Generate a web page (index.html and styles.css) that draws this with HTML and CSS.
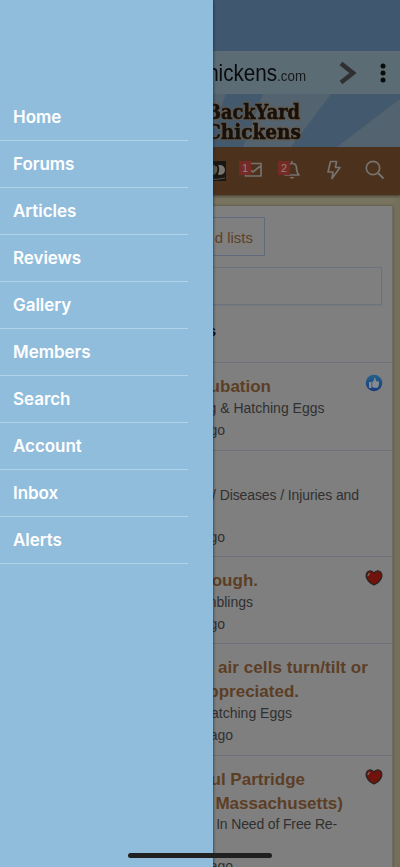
FILE: index.html
```html
<!DOCTYPE html>
<html lang="en">
<head>
<meta charset="utf-8">
<meta name="viewport" content="width=device-width, initial-scale=1">
<title>BackYard Chickens</title>
<link rel="stylesheet" href="styles.css">
</head>
<body>
<div class="page">
  <div class="status"></div>
  <header class="toolbar">
    <div class="address">hickens<small>.com</small></div>
    <svg class="forward" width="18" height="24" viewBox="0 0 18 24"><path d="M2 2.500 14 12 2 21.500" fill="none" stroke="#302f31" stroke-width="4.500"/></svg>
    <svg class="more" width="6" height="20" viewBox="0 0 6 20"><g fill="#080a0b"><circle cx="3" cy="3" r="2.500"/><circle cx="3" cy="10" r="2.500"/><circle cx="3" cy="17" r="2.500"/></g></svg>
  </header>
  <svg class="banner" width="400" height="53" viewBox="0 0 400 53">
    <rect width="400" height="53" fill="#53636f"/>
    <path d="M226 0h37l-20 53h-36z" fill="#435a6e"/>
    <path d="M331 0h69v5l-63 48h-46z" fill="#435a6e"/>
    <g class="logo"><text x="206" y="25" textLength="94" lengthAdjust="spacingAndGlyphs">BackYard</text><text x="206" y="44.500" textLength="95" lengthAdjust="spacingAndGlyphs">Chickens</text></g>
  </svg>
  <nav class="nav">
    <svg class="avatar" width="20" height="20" viewBox="0 0 20 20"><rect width="20" height="20" fill="#181713"/><ellipse cx="14" cy="9" rx="5" ry="5" fill="#77756d"/><ellipse cx="7" cy="9" rx="4" ry="5" fill="#5c5a4d"/><path d="M11 4q3 5-1 10" fill="none" stroke="#181713" stroke-width="2"/><path d="M1 17q9 3 18 0" fill="none" stroke="#555047"/></svg>
    <span class="tool"><svg width="19" height="16" viewBox="0 0 19 16"><path d="M1.500 1.500h15.500v12.500h-15.500zM2 5l7 5 8-6.500" fill="none" stroke="#77726e" stroke-width="1.700" stroke-linejoin="round"/></svg><b class="badge">1</b></span>
    <span class="tool bell"><svg width="18" height="20" viewBox="0 0 18 20"><path d="M2 15h14c-2-2-2.500-3-2.500-7C13.500 5 12 3.500 9 3.500S4.500 5 4.500 8c0 4-.5 5-2.500 7zM9 1v2" fill="none" stroke="#77726e" stroke-width="1.700" stroke-linejoin="round"/><path d="M6.500 17h5q-2.500 3.500-5 0z" fill="#77726e"/></svg><b class="badge">2</b></span>
    <svg class="bolt" width="16" height="20" viewBox="0 0 16 20"><path d="M4.500 1.500h6L9.500 7.500h4.500L6 18.500 7 12H2z" fill="none" stroke="#77726e" stroke-width="1.700" stroke-linejoin="round"/></svg>
    <svg class="search" width="20" height="20" viewBox="0 0 20 20"><path d="M13 13 18.500 18.500" stroke="#77726e" stroke-width="2"/><circle cx="8" cy="8" r="6.700" fill="none" stroke="#77726e" stroke-width="1.700"/></svg>
  </nav>
  <main class="card">
    <div class="lists">d lists</div>
    <div class="field"></div>
    <h2 class="heading">s</h2>
    <article class="row r1">
      <h3 class="e271">ubation</h3><p class="e324">g &amp; Hatching Eggs</p><p class="meta e225">go</p>
      <svg class="mark" width="18" height="18" viewBox="0 0 18 18"><defs><linearGradient id="like" x2="0" y2="1"><stop stop-color="#24628e"/><stop offset="1" stop-color="#193b7b"/></linearGradient></defs><circle cx="9" cy="9" r="8.300" fill="url(#like)"/><path d="M4 8h2.500v6H4zM7.200 8.200 9 6l.3-2.300q1.700 0 1.600 3.500H13q1.500.3.800 1.600.8.700 0 1.700.4 1-.5 1.700.1 1.600-1.300 1.600H9l-1.800-.8z" fill="#858b91"/></svg>
    </article>
    <article class="row r2"><h3></h3><p class="e359">/ Diseases / Injuries and</p><p></p><p class="meta e225">go</p></article>
    <article class="row r3"><h3 class="e258">ough.</h3><p class="e253">mblings</p><p class="meta e225">go</p>
      <svg class="mark heart-mark" width="18" height="16" viewBox="0 0 18 16"><path class="heart" d="M9 3Q5.500-.8 2.200 2.300C-.6 6 2.500 12.500 9 15c6.500-2.500 9.600-9 6.800-12.700Q12.500-.8 9 3z"/><path d="M3 6q.4-2.200 2-2.700" fill="none" stroke="#806562" stroke-width="1.300"/></svg>
    </article>
    <article class="row r4"><h3 class="e367">air cells turn/tilt or</h3><h3 class="e298">ppreciated.</h3><p class="e291">atching Eggs</p><p class="meta e233">ago</p></article>
    <article class="row r5"><h3 class="e305">ul Partridge</h3><h3 class="e343">Massachusetts)</h3><p class="e337">In Need of Free Re-</p><p></p><p class="meta e233">ago</p>
      <svg class="mark heart-mark" width="18" height="16" viewBox="0 0 18 16"><path class="heart" d="M9 3Q5.500-.8 2.200 2.300C-.6 6 2.500 12.500 9 15c6.500-2.500 9.600-9 6.800-12.700Q12.500-.8 9 3z"/><path d="M3 6q.4-2.200 2-2.700" fill="none" stroke="#806562" stroke-width="1.300"/></svg>
    </article>
  </main>
</div>
<aside class="drawer">
  <ul>
    <li>Home</li><li>Forums</li><li>Articles</li><li>Reviews</li><li>Gallery</li><li>Members</li><li>Search</li><li>Account</li><li>Inbox</li><li>Alerts</li>
  </ul>
</aside>
<div class="indicator"></div>
</body>
</html>
```
FILE: styles.css
```css
* { box-sizing: border-box; }
body {
  margin: 0;
  width: 400px;
  height: 867px;
  position: relative;
  overflow: hidden;
  font-family: "Liberation Sans", Arial, sans-serif;
}
.page {
  height: 867px;
  overflow: hidden;
  background: linear-gradient(90deg, #79745f 392px, #726e59);
}
.status { height: 51px; background: #3f586f; }
.toolbar {
  height: 43px;
  background: #5c6c75;
  display: flex;
  align-items: center;
}
.address {
  width: 306px;
  text-align: right;
  font-size: 24px;
  transform: scaleX(0.86);
  transform-origin: right;
  color: #090b0c;
}
.address small { font-size: 15.500px; color: #15191b; }
.forward { margin-left: 33px; }
.more { margin-left: 23px; margin-top: 1px; }
.banner { display: block; }
.logo {
  font: bold 20.500px "DejaVu Serif", serif;
  fill: #15110e;
  stroke: #15110e;
  stroke-width: 0.5px;
  filter: drop-shadow(0 0 0.8px #7a5b3a) drop-shadow(0 0 0.5px #67513a);
}
.nav {
  height: 48px;
  padding-left: 206px;
  background: #4c321c;
  display: flex;
  align-items: center;
  box-shadow: 0 1px 3px #3d382a;
}
.avatar { margin-top: -1px; }
.tool { position: relative; display: flex; margin-left: 18px; margin-top: -2px; }
.tool.bell { margin-left: 20px; }
.badge {
  position: absolute;
  left: -5px;
  top: -1px;
  width: 12px;
  height: 14px;
  background: #752b25;
  color: #92807c;
  font: 11px/14px "Liberation Sans", sans-serif;
  text-align: center;
}
.bell .badge { left: -5px; top: 1px; }
.bolt { margin-left: 25px; margin-top: -2px; }
.search { margin-left: 23px; margin-top: -2px; }
.card {
  width: 393px;
  height: 700px;
  margin-top: 11px;
  padding-top: 11px;
  background: #7f7f7f;
  border-right: 1px solid #6e6d68;
  box-shadow: 0 0 3px #504d40;
}
.lists {
  width: 265px;
  height: 39px;
  border: 1px solid #626a7d;
  padding-right: 11px;
  font-size: 15px;
  line-height: 39px;
  text-align: right;
  color: #5e4128;
}
.field {
  width: 382px;
  height: 38px;
  margin-top: 11px;
  border: 1px solid #6d737c;
  box-shadow: 0 1px 1px #777a7e;
}
.heading {
  width: 216px;
  height: 57px;
  margin: 0;
  padding-top: 15px;
  text-align: right;
  font-size: 15px;
  line-height: 22px;
  color: #080808;
}
.row { position: relative; border-top: 1px solid #6b707a; padding-top: 12px; }
.r1 { height: 88px; }
.r2 { height: 106px; padding-top: 10px; }
.r3 { height: 87px; }
.r4 { height: 112px; }
.row h3 {
  margin: 0;
  height: 23.5px;
  font-size: 17px;
  line-height: 24px;
  text-align: right;
  color: #5c3e25;
}
.row p {
  margin: 0;
  height: 20px;
  font-size: 14px;
  line-height: 20px;
  text-align: right;
  color: #303030;
}
.r1 h3 + p, .r3 h3 + p, .r5 h3 + p { margin-top: -1px; }
.row .meta { margin-top: 2px; }
.e225 { width: 225px; }
.e233 { width: 233px; }
.e253 { width: 253px; }
.e258 { width: 258px; }
.e271 { width: 271px; }
.e291 { width: 292px; }
.e298 { width: 299px; }
.e305 { width: 305px; }
.row .e324 { width: 324.500px; }
.row .e337 { width: 337px; letter-spacing: -0.15px; }
.e343 { width: 343px; }
.row .e359 { width: 359px; letter-spacing: -0.1px; }
.row .e367 { width: 368px; letter-spacing: 0.08px; }
.mark { position: absolute; left: 365px; top: 11px; }
.heart-mark { top: 13px; }
.heart { fill: #70130c; stroke: #292321; stroke-width: 1.2; }
.drawer {
  position: absolute;
  left: 0;
  top: 0;
  width: 213px;
  height: 867px;
  padding-top: 94px;
  background: #91bddc;
  box-shadow: 0 0 3px #222;
}
.drawer ul { margin: 0; padding: 0; list-style: none; width: 188px; }
.drawer li {
  height: 47px;
  padding-left: 13px;
  border-bottom: 1px solid #b2d2e7;
  font: 600 17px/46px Inter, sans-serif;
  letter-spacing: -0.05px;
  color: #fff;
}
.indicator {
  position: absolute;
  left: 128px;
  top: 853px;
  width: 144px;
  height: 5px;
  border-radius: 3px;
  background: #202020;
}
```
